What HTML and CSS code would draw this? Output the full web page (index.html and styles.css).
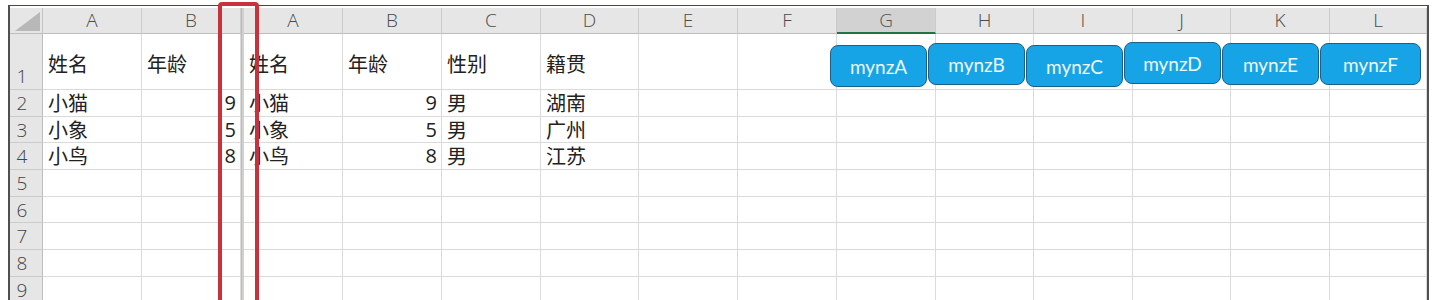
FILE: index.html
```html
<!DOCTYPE html>
<html lang="zh-CN">
<head>
    <meta charset="UTF-8">
    <meta name="viewport" content="width=device-width, initial-scale=1.0">
    <title>mynz sheet</title>
    <link rel="stylesheet" href="styles.css">
</head>
<body>
    <div class="page">
        <div class="sheet">
            <!-- column headers -->
            <div class="corner"></div>
            <div class="colhdr">A</div><div class="colhdr">B</div><div class="split"></div>
            <div class="colhdr">A</div><div class="colhdr">B</div><div class="colhdr">C</div><div class="colhdr">D</div>
            <div class="colhdr">E</div><div class="colhdr">F</div><div class="colhdr selected">G</div><div class="colhdr">H</div>
            <div class="colhdr">I</div><div class="colhdr">J</div><div class="colhdr">K</div><div class="colhdr">L</div>

            <!-- row 1 -->
            <div class="rowhdr tall">1</div>
            <div class="cell mid">姓名</div><div class="cell mid">年龄</div><div class="split"></div>
            <div class="cell mid">姓名</div><div class="cell mid">年龄</div><div class="cell mid">性别</div><div class="cell mid">籍贯</div>
            <div class="cell"></div><div class="cell"></div><div class="cell"></div><div class="cell"></div>
            <div class="cell"></div><div class="cell"></div><div class="cell"></div><div class="cell"></div>

            <!-- row 2 -->
            <div class="rowhdr">2</div>
            <div class="cell">小猫</div><div class="cell num">9</div><div class="split"></div>
            <div class="cell">小猫</div><div class="cell num">9</div><div class="cell">男</div><div class="cell">湖南</div>
            <div class="cell"></div><div class="cell"></div><div class="cell"></div><div class="cell"></div>
            <div class="cell"></div><div class="cell"></div><div class="cell"></div><div class="cell"></div>

            <!-- row 3 -->
            <div class="rowhdr">3</div>
            <div class="cell">小象</div><div class="cell num">5</div><div class="split"></div>
            <div class="cell">小象</div><div class="cell num">5</div><div class="cell">男</div><div class="cell">广州</div>
            <div class="cell"></div><div class="cell"></div><div class="cell"></div><div class="cell"></div>
            <div class="cell"></div><div class="cell"></div><div class="cell"></div><div class="cell"></div>

            <!-- row 4 -->
            <div class="rowhdr">4</div>
            <div class="cell">小鸟</div><div class="cell num">8</div><div class="split"></div>
            <div class="cell">小鸟</div><div class="cell num">8</div><div class="cell">男</div><div class="cell">江苏</div>
            <div class="cell"></div><div class="cell"></div><div class="cell"></div><div class="cell"></div>
            <div class="cell"></div><div class="cell"></div><div class="cell"></div><div class="cell"></div>

            <!-- rows 5-9 (empty) -->
            <div class="rowhdr">5</div>
            <div class="cell"></div><div class="cell"></div><div class="split"></div>
            <div class="cell"></div><div class="cell"></div><div class="cell"></div><div class="cell"></div>
            <div class="cell"></div><div class="cell"></div><div class="cell"></div><div class="cell"></div>
            <div class="cell"></div><div class="cell"></div><div class="cell"></div><div class="cell"></div>

            <div class="rowhdr">6</div>
            <div class="cell"></div><div class="cell"></div><div class="split"></div>
            <div class="cell"></div><div class="cell"></div><div class="cell"></div><div class="cell"></div>
            <div class="cell"></div><div class="cell"></div><div class="cell"></div><div class="cell"></div>
            <div class="cell"></div><div class="cell"></div><div class="cell"></div><div class="cell"></div>

            <div class="rowhdr">7</div>
            <div class="cell"></div><div class="cell"></div><div class="split"></div>
            <div class="cell"></div><div class="cell"></div><div class="cell"></div><div class="cell"></div>
            <div class="cell"></div><div class="cell"></div><div class="cell"></div><div class="cell"></div>
            <div class="cell"></div><div class="cell"></div><div class="cell"></div><div class="cell"></div>

            <div class="rowhdr">8</div>
            <div class="cell"></div><div class="cell"></div><div class="split"></div>
            <div class="cell"></div><div class="cell"></div><div class="cell"></div><div class="cell"></div>
            <div class="cell"></div><div class="cell"></div><div class="cell"></div><div class="cell"></div>
            <div class="cell"></div><div class="cell"></div><div class="cell"></div><div class="cell"></div>

            <div class="rowhdr">9</div>
            <div class="cell"></div><div class="cell"></div><div class="split"></div>
            <div class="cell"></div><div class="cell"></div><div class="cell"></div><div class="cell"></div>
            <div class="cell"></div><div class="cell"></div><div class="cell"></div><div class="cell"></div>
            <div class="cell"></div><div class="cell"></div><div class="cell"></div><div class="cell"></div>
        </div>

        <!-- floating shape buttons -->
        <div class="shapes">
            <button class="shape btn-a">mynzA</button>
            <button class="shape btn-b">mynzB</button>
            <button class="shape btn-c">mynzC</button>
            <button class="shape btn-d">mynzD</button>
            <button class="shape btn-e">mynzE</button>
            <button class="shape btn-f">mynzF</button>
        </div>

        <!-- red highlight around the split -->
        <div class="highlight"></div>
    </div>
</body>
</html>
```

FILE: styles.css
```css
body {
    margin: 0;
    padding: 0;
    background-color: #fff;
    font-family: "Noto Sans CJK SC", "Liberation Sans", sans-serif;
}

.page {
    position: relative;
    height: 300px;
    overflow: hidden;
    padding-top: 5px;
    box-sizing: border-box;
}

.sheet {
    display: grid;
    grid-template-columns: 33px 99px 99px 3px 99px 99px 99px 98px 99px 99px 99px 98px 99px 98px 99px 97px;
    grid-template-rows: 26px 56px 27px 26px 27px 27px 26px 27px 27px 26px;
    width: fit-content;
    margin-left: 8px;
    padding-top: 2px;
    border-top: 1px solid #4a4468;
    border-left: 2px solid #505050;
    border-right: 2px solid #505050;
    background-color: #fff;
}

.sheet > div {
    box-sizing: border-box;
}

.corner {
    position: relative;
    background-color: #e6e6e6;
    border-right: 1px solid #c4c4c4;
    border-bottom: 1px solid #bdbdbd;
}

.corner::after {
    content: "";
    position: absolute;
    left: 5px;
    top: 4px;
    width: 25px;
    height: 19px;
    background-color: #b8b8b8;
    clip-path: polygon(100% 0, 100% 100%, 0 100%);
}

.colhdr {
    background-color: #e6e6e6;
    border-right: 1px solid #cbcbcb;
    border-bottom: 1px solid #bdbdbd;
    color: #4a4a4a;
    font-family: "Open Sans", "Liberation Sans", sans-serif;
    font-size: 19px;
    font-weight: 300;
    line-height: 25px;
    text-align: center;
}

.colhdr.selected {
    background-color: #d2d2d2;
    border-bottom: 2px solid #217346;
    color: #555;
}

.rowhdr {
    display: flex;
    align-items: center;
    justify-content: center;
    padding-right: 8px;
    background-color: #e6e6e6;
    border-right: 1px solid #bdbdbd;
    border-bottom: 1px solid #cbcbcb;
    color: #444;
    font-family: "Open Sans", "Liberation Sans", sans-serif;
    font-size: 19px;
    font-weight: 300;
}

.rowhdr.tall {
    align-items: flex-end;
}

.split {
    background-color: #d0d0d0;
    border-left: 1px solid #bcbcbc;
}

.cell {
    display: flex;
    align-items: center;
    padding: 0 4px 0 5px;
    border-right: 1px solid #dadada;
    border-bottom: 1px solid #dadada;
    color: #222;
    font-size: 20px;
    line-height: 1;
    white-space: nowrap;
}

.cell.mid {
    padding-top: 4px;
}

.cell.num {
    justify-content: flex-end;
    font-family: "Open Sans", "Liberation Sans", sans-serif;
}

.shapes {
    position: absolute;
    left: 830px;
    top: 42px;
    display: flex;
    align-items: flex-start;
    gap: 1px;
}

.shape {
    width: 97px;
    height: 42px;
    padding: 0;
    background-color: #16a4e7;
    border: 1.5px solid #1d5f85;
    border-radius: 8px;
    color: #eef8ff;
    font-family: "Lato", "Open Sans", sans-serif;
    font-size: 19px;
    cursor: pointer;
}

.btn-a { margin-top: 3px; }
.btn-b { margin-top: 1px; }
.btn-c { margin-top: 3px; }
.btn-d { margin-top: 0; }
.btn-e { margin-top: 1px; }
.btn-f { margin-top: 1px; width: 101px; }

.highlight {
    position: absolute;
    left: 218px;
    top: 2px;
    width: 41px;
    height: 330px;
    box-sizing: border-box;
    border: 4px solid #c8323d;
    border-radius: 4px;
}
```
